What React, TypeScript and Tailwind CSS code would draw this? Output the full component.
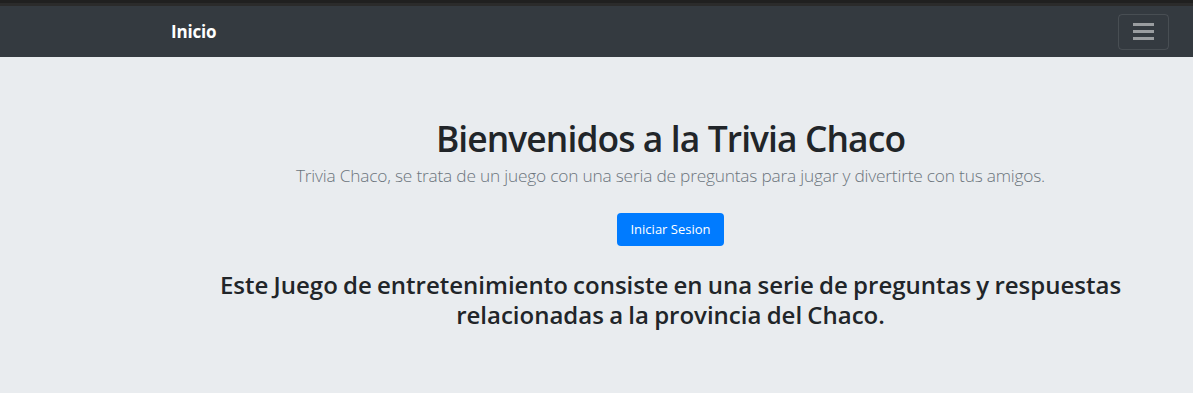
export default function App() {
  return (
    <div className="min-h-[403px] bg-white" style={{ fontFamily: '"Open Sans", "Noto Sans", sans-serif' }}>
      <div className="h-[6px] bg-[#2b2b2b] border-t-[3px] border-[#202020]" />
      <nav className="h-[51px] bg-[#343a40] flex items-center justify-between pl-[171px] pr-[24px]">
        <a className="text-white font-bold text-[17px] tracking-[-0.2px]">Inicio</a>
        <button className="w-[51px] h-[36px] rounded-[4px] border border-white/10 flex flex-col items-center justify-center gap-[4px]">
          <span className="block w-[21px] h-[3px] bg-white/50" />
          <span className="block w-[21px] h-[3px] bg-white/50" />
          <span className="block w-[21px] h-[3px] bg-white/50" />
        </button>
      </nav>
      <section className="h-[336px] bg-[#e9ecef] flex flex-col items-center pt-[57px] pl-[148px]">
        <h1 className="text-[35.4px] leading-[48px] font-semibold text-[#212529] tracking-[-0.9px]">Bienvenidos a la Trivia Chaco</h1>
        <p className="mt-[2px] text-[17.3px] leading-[24px] font-light text-[#6c757d] tracking-[-0.2px]">
          Trivia Chaco, se trata de un juego con una seria de preguntas para jugar y divertirte con tus amigos.
        </p>
        <button className="mt-[25px] h-[33px] px-[13px] rounded-[4px] bg-[#007bff] text-white text-[13px]">Iniciar Sesion</button>
        <h3 className="mt-[24px] text-center text-[24px] leading-[30px] font-semibold text-[#212529] [word-spacing:-1px]">
          Este Juego de entretenimiento consiste en una serie de preguntas y respuestas
          <br />
          relacionadas a la provincia del Chaco.
        </h3>
      </section>
    </div>
  );
}
